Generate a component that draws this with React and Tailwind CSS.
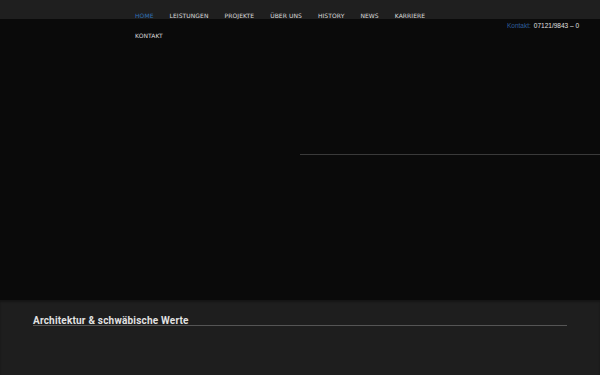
import React from "react";

const NAV = ["HOME", "LEISTUNGEN", "PROJEKTE", "ÜBER UNS", "HISTORY", "NEWS", "KARRIERE"];

export default function App() {
  return (
    <div className="w-[600px] h-[375px] overflow-hidden bg-[#0a0a0a] flex flex-col" style={{ fontFamily: "'DejaVu Sans', sans-serif" }}>
      {/* Header */}
      <div className="relative h-[300px] flex flex-col">
        <div className="h-[19px] bg-[#1f1f1f] shrink-0" />
        <nav className="absolute left-[135px] top-[12px] w-[310px]">
          <ul className="flex flex-wrap gap-x-[16px] gap-y-[12px] text-[6px] leading-[8px] tracking-[0.08px] text-[#dcdcdc]">
            {NAV.map((n, i) => (
              <li key={n} className={i === 0 ? "text-[#2f6fb5]" : ""}>{n}</li>
            ))}
            <li>KONTAKT</li>
          </ul>
        </nav>
        <div className="absolute right-[21px] top-[21px] text-[6.5px] leading-[9px] flex gap-[3px]" style={{ fontFamily: "'Liberation Sans', sans-serif" }}>
          <span className="text-[#2f5f9a]">Kontakt:</span>
          <span className="text-[#e0e0e0]">07121/9843 – 0</span>
        </div>
        <div className="mt-[135px] ml-[300px] h-px bg-[#3a3a3a]" />
      </div>

      {/* Footer section */}
      <div className="flex-1 bg-[#1e1e1e] shadow-[inset_0_2px_2px_rgba(0,0,0,0.3)] px-[33px] pt-[16px]">
        <h2 className="text-[10px] leading-[9px] font-bold text-[#e2e2e2] tracking-[0.2px] border-b border-[#555]" style={{ fontFamily: "Roboto, sans-serif" }}>
          Architektur &amp; schwäbische Werte
        </h2>
      </div>
    </div>
  );
}
